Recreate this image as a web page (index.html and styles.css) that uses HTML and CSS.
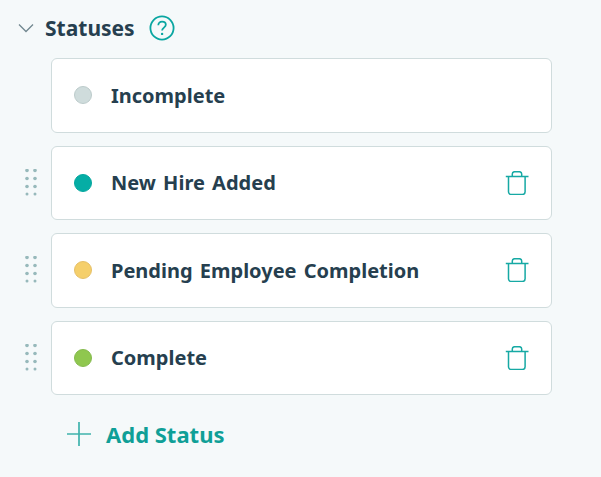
FILE: index.html
```html
<!DOCTYPE html>
<html lang="en">
<head>
<meta charset="utf-8">
<title>Statuses</title>
<link rel="stylesheet" href="styles.css">
</head>
<body>
<section class="panel">
  <header class="head">
    <svg class="chev" width="16" height="10" viewBox="0 0 16 10"><path d="M1 1.500l7 7 7-7" fill="none" stroke="#71878f" stroke-width="1.300"/></svg>
    <h2 class="title">Statuses</h2>
    <svg class="help" width="26" height="26" viewBox="0 0 26 26"><circle cx="13" cy="13" r="11.600" fill="none" stroke="#0aa6a1" stroke-width="1.800"/><path d="M9.300 10.200c0-2.200 1.600-3.600 3.800-3.600s3.700 1.300 3.700 3.200c0 2.900-3.700 2.800-3.700 5.800" fill="none" stroke="#0aa6a1" stroke-width="1.800"/><circle cx="13.100" cy="18.900" r="1.200" fill="#0aa6a1"/></svg>
  </header>
  <ul class="list">
    <li class="row">
      <span class="grip-slot"></span>
      <div class="card"><span class="dot dot-grey"></span><span class="name">Incomplete</span></div>
    </li>
    <li class="row">
      <span class="grip-slot"><svg class="grip" width="14" height="28" viewBox="0.5 1 14 28"><g fill="#97b9bb"><circle cx="2.500" cy="2.500" r="1.800"/><circle cx="10.500" cy="2.500" r="1.800"/><circle cx="2.500" cy="10.500" r="1.800"/><circle cx="10.500" cy="10.500" r="1.800"/><circle cx="2.500" cy="18.500" r="1.800"/><circle cx="10.500" cy="18.500" r="1.800"/><circle cx="2.500" cy="26" r="1.500"/><circle cx="10.500" cy="26" r="1.500"/></g></svg></span>
      <div class="card"><span class="dot dot-teal"></span><span class="name">New Hire Added</span>
        <svg class="trash" width="24" height="24" viewBox="0 0 24 24"><path d="M.8 5.500h22.700M3.500 5.500v15.200a2.800 2.800 0 0 0 2.800 2.800h11a2.800 2.800 0 0 0 2.800-2.800V5.500M7.300 5.500V3a2.300 2.300 0 0 1 2.300-2.300h4.800A2.300 2.300 0 0 1 16.700 3v2.500" fill="none" stroke="#16a9a4" stroke-width="1.500"/></svg></div>
    </li>
    <li class="row">
      <span class="grip-slot"><svg class="grip" width="14" height="28" viewBox="0.5 1 14 28"><g fill="#97b9bb"><circle cx="2.500" cy="2.500" r="1.800"/><circle cx="10.500" cy="2.500" r="1.800"/><circle cx="2.500" cy="10.500" r="1.800"/><circle cx="10.500" cy="10.500" r="1.800"/><circle cx="2.500" cy="18.500" r="1.800"/><circle cx="10.500" cy="18.500" r="1.800"/><circle cx="2.500" cy="26" r="1.500"/><circle cx="10.500" cy="26" r="1.500"/></g></svg></span>
      <div class="card"><span class="dot dot-yellow"></span><span class="name">Pending Employee Completion</span>
        <svg class="trash" width="24" height="24" viewBox="0 0 24 24"><path d="M.8 5.500h22.700M3.500 5.500v15.200a2.800 2.800 0 0 0 2.800 2.800h11a2.800 2.800 0 0 0 2.800-2.800V5.500M7.300 5.500V3a2.300 2.300 0 0 1 2.300-2.300h4.800A2.300 2.300 0 0 1 16.700 3v2.500" fill="none" stroke="#16a9a4" stroke-width="1.500"/></svg></div>
    </li>
    <li class="row">
      <span class="grip-slot"><svg class="grip" width="14" height="28" viewBox="0.5 1 14 28"><g fill="#97b9bb"><circle cx="2.500" cy="2.500" r="1.800"/><circle cx="10.500" cy="2.500" r="1.800"/><circle cx="2.500" cy="10.500" r="1.800"/><circle cx="10.500" cy="10.500" r="1.800"/><circle cx="2.500" cy="18.500" r="1.800"/><circle cx="10.500" cy="18.500" r="1.800"/><circle cx="2.500" cy="26" r="1.500"/><circle cx="10.500" cy="26" r="1.500"/></g></svg></span>
      <div class="card"><span class="dot dot-green"></span><span class="name">Complete</span>
        <svg class="trash" width="24" height="24" viewBox="0 0 24 24"><path d="M.8 5.500h22.700M3.500 5.500v15.200a2.800 2.800 0 0 0 2.800 2.800h11a2.800 2.800 0 0 0 2.800-2.800V5.500M7.300 5.500V3a2.300 2.300 0 0 1 2.300-2.300h4.800A2.300 2.300 0 0 1 16.700 3v2.500" fill="none" stroke="#16a9a4" stroke-width="1.500"/></svg></div>
    </li>
  </ul>
  <div class="add">
    <svg class="plus" width="24" height="24" viewBox="0 0 24 24"><path d="M0 12h24M12 0v24" fill="none" stroke="#3fb3ac" stroke-width="1.700"/></svg>
    <span class="add-label">Add Status</span>
  </div>
</section>
</body>
</html>
```
FILE: styles.css
```css
* { box-sizing: border-box; }
html, body { margin: 0; height: 100%; }
body {
  background: #f5f9fa;
  font-family: "Noto Sans", sans-serif;
  font-weight: 700;
  color: #263f4f;
  overflow: hidden;
}
.panel { padding: 14px 0 0 18px; }
.head { display: flex; align-items: center; height: 28px; }
.chev { margin-right: 11px; }
.title { margin: 0 14px 0 0; font-size: 21px; line-height: 28px; font-weight: 700; }
.list { list-style: none; margin: 16px 0 0; padding: 0; display: flex; flex-direction: column; gap: 13px; }
.row { display: flex; align-items: center; }
.grip-slot { width: 33px; display: flex; padding-left: 7px; }
.card {
  width: 501px;
  height: 74.500px;
  display: flex;
  align-items: center;
  padding: 0 22px;
  background: #fff;
  border: 1px solid #d0dcdd;
  border-radius: 6px;
}
.dot { width: 18px; height: 18px; border-radius: 50%; margin-right: 19px; flex: none; border: 1px solid; }
.dot-grey { background: #cfdcdc; border-color: #bccbcb; }
.dot-teal { background: #05ada5; border-color: #05a79f; }
.dot-yellow { background: #f5cf6b; border-color: #e6c068; }
.dot-green { background: #8fc74f; border-color: #85ba4e; }
.name { font-size: 20px; line-height: 28px; word-spacing: 2px; flex: 1; padding-top: 1px; }
.add { display: flex; align-items: center; margin: 25px 0 0 49px; height: 28px; }
.plus { margin-right: 15px; }
.add-label { font-size: 22px; line-height: 28px; color: #0f9f97; }
```
